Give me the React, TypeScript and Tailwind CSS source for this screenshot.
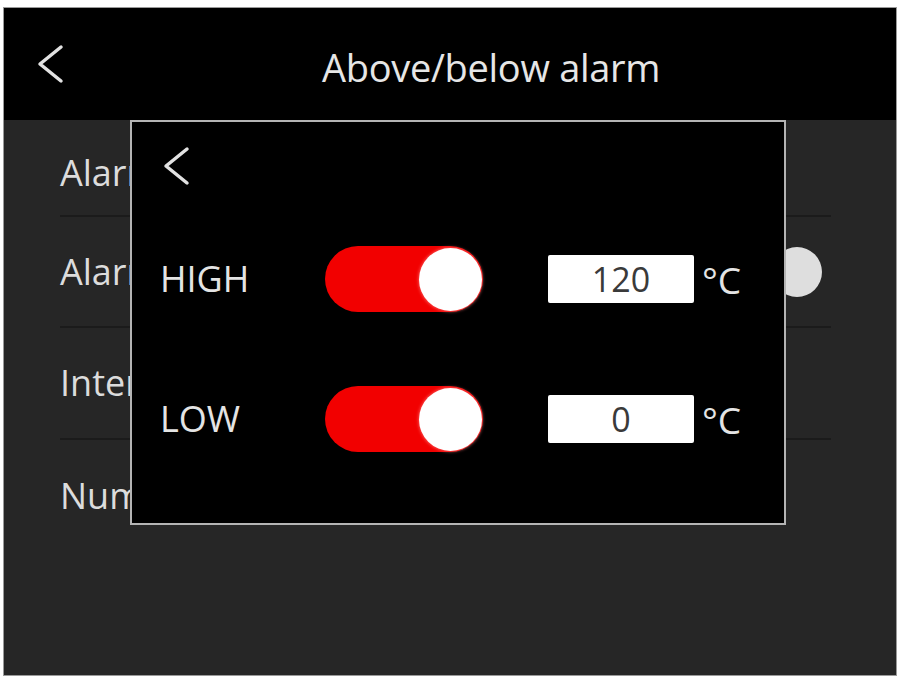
import React from "react";

function Chevron({ className }: { className?: string }) {
  return (
    <svg className={className} width="28" height="40" viewBox="0 0 28 40" fill="none">
      <polyline points="25,3 4,20 25,37" stroke="#e2e2e2" strokeWidth="3.5" strokeLinecap="round" strokeLinejoin="round" />
    </svg>
  );
}

function Toggle() {
  return (
    <div className="flex items-center justify-end w-[158px] h-[66px] rounded-full bg-[#f20000] pr-[1px]">
      <div className="w-[63px] h-[63px] rounded-full bg-white shadow-[0_0_3px_1px_rgba(255,120,120,0.6)]" />
    </div>
  );
}

function AlarmRow({ label, value }: { label: string; value: string }) {
  return (
    <div className="flex items-center h-[66px]">
      <div className="w-[193px] pl-[28px] text-[36px] text-[#e4e4e4] leading-none">{label}</div>
      <Toggle />
      <div className="ml-[65px] w-[146px] h-[48px] bg-white rounded-[2px] flex items-center justify-center text-[34px] text-[#3a3a3a] leading-none">
        {value}
      </div>
      <div className="ml-[8px] text-[37px] text-[#e4e4e4] leading-none">°C</div>
    </div>
  );
}

export default function App() {
  const rows = [
    { t: "Alarm", h: "h-[97px]" },
    { t: "Alarm", h: "h-[111px]" },
    { t: "Interval", h: "h-[112px]" },
    { t: "Number", h: "h-[112px]" },
  ];
  return (
    <div
      className="w-[898px] h-[678px] bg-white pt-[7px] pl-[3px]"
      style={{ fontFamily: '"Open Sans", "Noto Sans", sans-serif' }}
    >
      <div className="relative w-[894px] h-[669px] bg-[#262626] border border-[#9a9a9a] overflow-hidden flex flex-col">
        {/* Header */}
        <div className="h-[112px] bg-black flex items-center shrink-0">
          <Chevron className="ml-[32px]" />
          <div className="ml-[258px] mt-[6px] text-[38px] text-[#e6e6e6] tracking-[-0.3px] leading-none">
            Above/below alarm
          </div>
        </div>

        {/* Background list */}
        <div className="flex flex-col">
          {rows.map((r, i) => (
            <div key={i} className={`${r.h} ml-[56px] mr-[65px] flex items-center relative ${i < 3 ? "border-b-2 border-[#1b1b1b]" : ""}`}>
              <span className={`text-[36px] text-[#dcdcdc] leading-none ${i === 0 ? "mt-[10px]" : ""}`}>{r.t}</span>
              {i === 1 && (
                <div className="ml-auto mr-[9px] w-[50px] h-[50px] rounded-full bg-[#dedede]" />
              )}
            </div>
          ))}
        </div>

        {/* Modal */}
        <div className="absolute left-[126px] top-[112px] w-[656px] h-[405px] bg-black border-2 border-[#b4b4b4] flex flex-col">
          <Chevron className="ml-[30px] mt-[24px]" />
          <div className="mt-[60px]">
            <AlarmRow label="HIGH" value="120" />
          </div>
          <div className="mt-[74px]">
            <AlarmRow label="LOW" value="0" />
          </div>
        </div>
      </div>
    </div>
  );
}
